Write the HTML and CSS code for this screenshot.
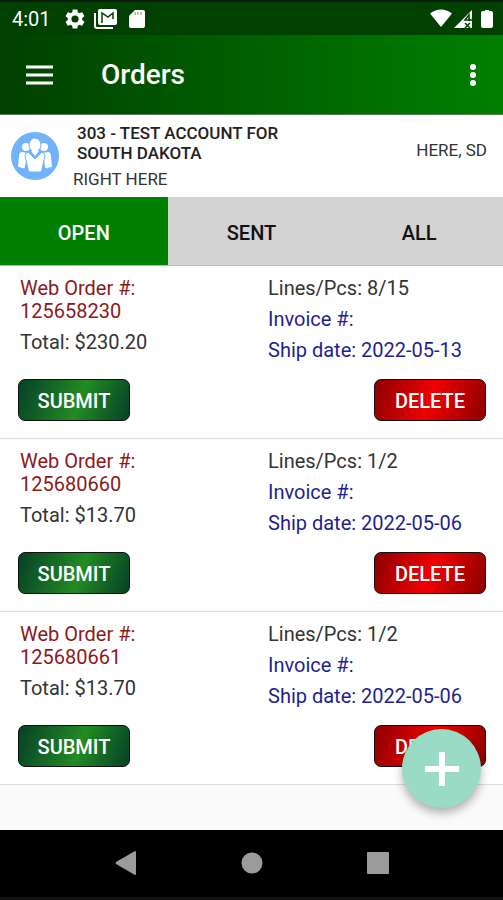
FILE: index.html
```html
<!DOCTYPE html>
<html lang="en">
<head>
    <meta charset="UTF-8">
    <meta name="viewport" content="width=device-width, initial-scale=1.0">
    <title>Orders</title>
    <link rel="stylesheet" href="styles.css">
</head>
<body>
    <div class="status-bar">
        <span class="clock">4:01</span>
        <svg width="20" height="20" viewBox="2 2 20 20"><path fill="#fff" d="M19.14 12.94c.04-.3.06-.61.06-.94s-.02-.64-.07-.94l2.03-1.58a.49.49 0 0 0 .12-.61l-1.92-3.32a.49.49 0 0 0-.59-.22l-2.39.96c-.5-.38-1.03-.7-1.62-.94l-.36-2.54a.48.48 0 0 0-.48-.41h-3.84c-.24 0-.43.17-.47.41l-.36 2.54c-.59.24-1.13.57-1.62.94l-2.39-.96a.48.48 0 0 0-.59.22L2.74 8.87c-.12.21-.08.47.12.61l2.03 1.58c-.05.3-.09.63-.09.94s.02.64.07.94l-2.03 1.58a.49.49 0 0 0-.12.61l1.92 3.32c.12.22.37.29.59.22l2.39-.96c.5.38 1.03.7 1.62.94l.36 2.54c.05.24.24.41.48.41h3.84c.24 0 .44-.17.47-.41l.36-2.54c.59-.24 1.13-.56 1.62-.94l2.39.96c.22.08.47 0 .59-.22l1.92-3.32a.49.49 0 0 0-.12-.61l-2.01-1.58zM12 15.6A3.6 3.6 0 1 1 12 8.400a3.6 3.6 0 0 1 0 7.200z"/></svg>
        <svg class="mail" width="23" height="20" viewBox="0 0 23 20"><path fill="none" stroke="#fff" stroke-width="2" d="M1 4v13q0 2 2 2h16"/><rect x="4" y="0" width="19" height="16" rx="2" fill="#fff"/><path fill="none" stroke="#004000" stroke-width="1.500" d="M8 14V4l6 4 5-4v6"/></svg>
        <svg class="card" width="16" height="20" viewBox="0 0 16 20"><path fill="#fff" d="M6 1h8q2 0 2 2v14q0 2-2 2H2q-2 0-2-2V7z"/><path stroke="#9ab59a" stroke-width="1.500" d="M6 3v3M9 3v3M12 3v3"/></svg>
        <div class="signals">
            <svg width="22" height="20" viewBox="0 0 22 20"><path fill="#fff" d="M0 4.500Q11-3.500 22 4.500L11 18z"/></svg>
            <svg width="19" height="20" viewBox="0 0 19 20"><path fill="#fff" d="M0 19L18 1v18z"/><path fill="none" stroke="#004000" stroke-width="1.500" d="M15 12V6l-4 5h7M11 14l5 5M16 14l-5 5"/></svg>
            <svg width="12" height="20" viewBox="0 0 12 20"><path fill="#fff" d="M4 1h4v1h2q2 0 2 2v13q0 2-2 2H2q-2 0-2-2V4q0-2 2-2h2z"/></svg>
        </div>
    </div>

    <header class="app-bar">
        <button class="icon-button" aria-label="Menu">
            <svg width="27" height="20" viewBox="0 0 27 20"><path stroke="#fff" stroke-width="3" d="M0 2h27M0 10h27M0 18h27"/></svg>
        </button>
        <h1>Orders</h1>
        <button class="icon-button" aria-label="More options">
            <svg width="8" height="24" viewBox="0 0 8 24"><g fill="#fff"><circle cx="4" cy="4" r="3"/><circle cx="4" cy="12" r="3"/><circle cx="4" cy="20" r="3"/></g></svg>
        </button>
    </header>

    <section class="account">
        <svg class="avatar" width="48" height="48" viewBox="0 0 48 48">
            <circle cx="24" cy="24" r="24" fill="#71b3fa"/>
            <g fill="#fff">
                <circle cx="15" cy="15" r="4"/>
                <circle cx="33" cy="15" r="4"/>
                <path d="M11 20l5 1 -2 14q-1 2-3 1t-4-1l1-10q0-5 3-5zM37 20l-5 1 2 14q1 2 3 1t4-1l-1-10q0-5-3-5z"/>
                <ellipse cx="24" cy="13" rx="6" ry="7" stroke="#71b3fa"/>
                <path stroke="#71b3fa" d="M17 20l7 7 7-7q3 1 3 4l-3 13-1 3H18l-1-3-3-13q0-3 3-4z"/>
                <path d="M20 19h8l-4 5z"/>
            </g>
        </svg>
        <div class="account-info">
            <h2>303 - TEST ACCOUNT FOR SOUTH DAKOTA</h2>
            <p>RIGHT HERE</p>
        </div>
        <p class="location">HERE, SD</p>
    </section>

    <nav class="tabs">
        <button class="active">OPEN</button>
        <button>SENT</button>
        <button>ALL</button>
    </nav>

    <main>
        <article class="order">
            <div class="details">
                <div>
                    <p class="web-order">Web Order #: 125658230</p>
                    <p>Total: $230.20</p>
                </div>
                <div>
                    <p>Lines/Pcs: 8/15</p>
                    <p class="invoice">Invoice #:</p>
                    <p class="invoice">Ship date: 2022-05-13</p>
                </div>
            </div>
            <div class="actions">
                <button class="submit">SUBMIT</button>
                <button class="delete">DELETE</button>
            </div>
        </article>

        <article class="order">
            <div class="details">
                <div>
                    <p class="web-order">Web Order #: 125680660</p>
                    <p>Total: $13.70</p>
                </div>
                <div>
                    <p>Lines/Pcs: 1/2</p>
                    <p class="invoice">Invoice #:</p>
                    <p class="invoice">Ship date: 2022-05-06</p>
                </div>
            </div>
            <div class="actions">
                <button class="submit">SUBMIT</button>
                <button class="delete">DELETE</button>
            </div>
        </article>

        <article class="order">
            <div class="details">
                <div>
                    <p class="web-order">Web Order #: 125680661</p>
                    <p>Total: $13.70</p>
                </div>
                <div>
                    <p>Lines/Pcs: 1/2</p>
                    <p class="invoice">Invoice #:</p>
                    <p class="invoice">Ship date: 2022-05-06</p>
                </div>
            </div>
            <div class="actions">
                <button class="submit">SUBMIT</button>
                <button class="delete">DELETE</button>
            </div>
        </article>

        <button class="add" aria-label="New order">
            <svg width="34" height="34" viewBox="0 0 34 34"><path stroke="#fff" stroke-width="6" d="M17 0v34M0 17h34"/></svg>
        </button>
    </main>

    <footer class="system-nav">
        <button aria-label="Back"><svg width="22" height="26" viewBox="0 0 22 26"><path fill="#9b9b9b" d="M20 1q1 0 1 1v22q0 1-1 1L1 14q-1-1 0-2z"/></svg></button>
        <button aria-label="Home"><svg width="22" height="22" viewBox="0 0 22 22"><circle cx="11" cy="11" r="10.500" fill="#9b9b9b"/></svg></button>
        <button aria-label="Recent apps"><svg width="22" height="22" viewBox="0 0 22 22"><rect width="22" height="22" rx="1" fill="#9b9b9b"/></svg></button>
    </footer>
</body>
</html>
```
FILE: styles.css
```css
* {
    box-sizing: border-box;
}
body {
    margin: 0;
    min-height: 100vh;
    display: flex;
    flex-direction: column;
    font-family: Roboto, sans-serif;
    font-size: 20px;
    color: #333;
    background-color: #fafafa;
}
h1, h2, p {
    margin: 0;
}
button {
    font-family: inherit;
    font-size: 20px;
    font-weight: 500;
    padding: 0;
    border: none;
    background: none;
    cursor: pointer;
}
svg {
    display: block;
}

.status-bar {
    display: flex;
    align-items: center;
    height: 35px;
    padding: 0 10px 0 12px;
    border-top: 2px solid #101c10;
    background-color: #004000;
    color: #fff;
}
.clock {
    width: 53px;
}
.mail {
    margin-left: 9px;
}
.card {
    margin-left: 12px;
}
.signals {
    display: flex;
    gap: 2px;
    margin-left: auto;
}
.signals svg:last-child {
    margin-left: 6px;
}

.app-bar {
    display: flex;
    align-items: center;
    height: 80px;
    padding: 0 26px;
    border-bottom: 1px solid #5c7a5c;
    background: linear-gradient(90deg, #004000, #008000);
    color: #fff;
}
.app-bar h1 {
    flex: 1;
    margin-left: 48px;
    font-size: 28px;
    font-weight: 500;
}

.account {
    display: flex;
    align-items: center;
    height: 82px;
    padding: 0 16px 0 11px;
    background-color: #fff;
}
.account-info {
    flex: 1;
    margin-left: 14px;
    font-size: 17px;
}
.account h2 {
    max-width: 220px;
    margin: 0 0 6px 4px;
    font-size: 17px;
    line-height: 20px;
    font-weight: 500;
    color: #222;
}
.location {
    padding-bottom: 12px;
    font-size: 17px;
}

.tabs {
    display: grid;
    grid-template-columns: repeat(3, 1fr);
    height: 69px;
    border-bottom: 1px solid #bbb;
    background-color: #d3d3d3;
}
.tabs button {
    padding-top: 3px;
    color: #111;
}
.tabs .active {
    background-color: #008000;
    color: #fff;
}

main {
    flex: 1;
    position: relative;
}
.order {
    padding: 11px 17px 17px 18px;
    border-bottom: 1px solid #dcdcdc;
    background-color: #fff;
}
.details {
    display: grid;
    grid-template-columns: 1fr 1fr;
    column-gap: 30px;
    line-height: 23px;
    padding-left: 2px;
}
.details p {
    margin-bottom: 8px;
}
.web-order {
    max-width: 130px;
    color: #8b1a1a;
}
.invoice {
    color: #1f1f8f;
}
.actions {
    display: flex;
    justify-content: space-between;
    margin-top: 9px;
}
.actions button {
    width: 112px;
    height: 42px;
    padding-top: 2px;
    border: 1px solid #111;
    border-radius: 7px;
    color: #fff;
}
.actions .submit {
    background: linear-gradient(110deg, #064027, #228b22 55%, #064027);
}
.actions .delete {
    background: linear-gradient(110deg, #8b0000, #f00000 50%, #8b0000);
}
/* floating button */
.add {
    position: absolute;
    right: 22px;
    bottom: 22px;
    width: 79px;
    height: 79px;
    display: flex;
    align-items: center;
    justify-content: center;
    border-radius: 50%;
    background-color: #9adbc5;
    box-shadow: 0 5px 10px rgba(0, 0, 0, 0.3);
}

.system-nav {
    display: flex;
    align-items: center;
    justify-content: center;
    gap: 104px;
    height: 70px;
    padding-bottom: 2px;
    border-bottom: 3px solid #141414;
    background-color: #000;
}
```
